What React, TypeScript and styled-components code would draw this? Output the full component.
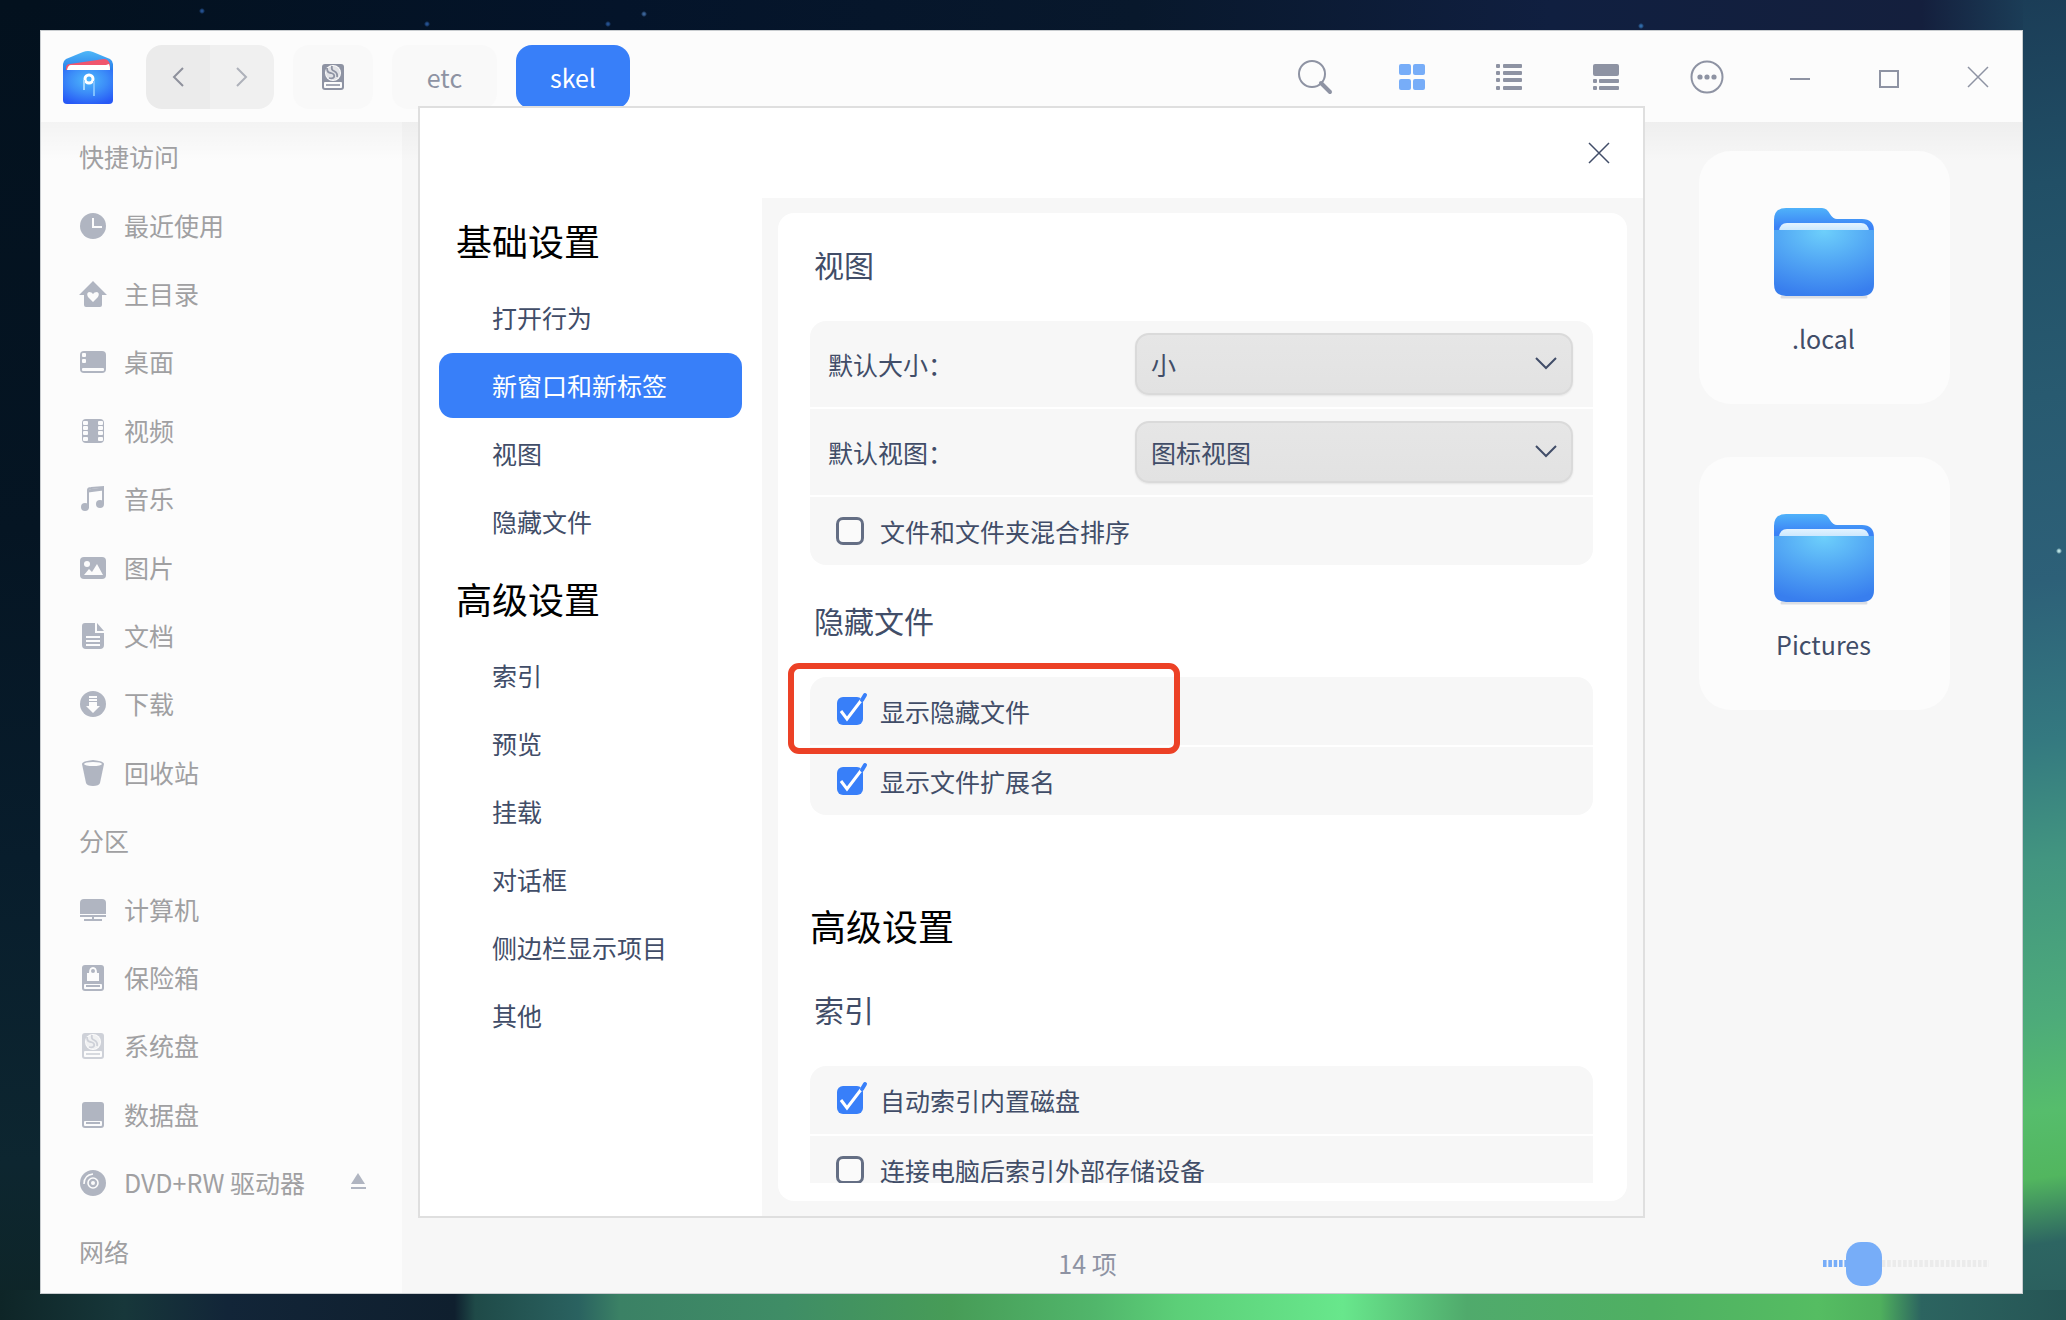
import React, { useState } from "react";
import styled, { createGlobalStyle, css } from "styled-components";

const color = {
  accent: "#387ff9",
  accentSoft: "#77adf8",
  ink: "#414d68",
  muted: "#a0a0a2",
  icon: "#b0b5c1",
  toolIcon: "#8e93a3",
  pane: "#f7f7f7",
  chrome: "#fcfcfc",
  dialogBorder: "#dfdfdf",
};

const GlobalStyle = createGlobalStyle`
  *, *::before, *::after { box-sizing: border-box; }
  html, body { margin: 0; height: 100%; }
  #root { height: 100%; }
  body {
    font-family: "Noto Sans CJK SC", "Noto Sans", sans-serif;
    font-size: 25px;
    line-height: 36px;
    color: ${color.ink};
    overflow: hidden;
  }
  button, select, input { font: inherit; color: inherit; margin: 0; }
  button { border: 0; padding: 0; background: none; cursor: pointer; }
  a { color: inherit; text-decoration: none; }
  svg { display: block; flex: none; }
`;

/* ---------- desktop and window ---------- */

const Desktop = styled.div`
  height: 100%;
  min-height: 900px;
  padding: 30px 43px 26px 40px;
  display: flex;
  background:
    radial-gradient(circle at 608px 24px, #24508f 0 1px, transparent 3px),
    radial-gradient(circle at 427px 24px, #24508f 0 1px, transparent 3px),
    radial-gradient(circle at 202px 11px, #24508f 0 1px, transparent 3px),
    radial-gradient(circle at 644px 14px, #3a6296 0 1px, transparent 3px),
    radial-gradient(circle at 1641px 26px, #2f6aa8 0 1px, transparent 3px),
    radial-gradient(circle at 2059px 551px, #b8e0e0 0 1px, transparent 3px),
    linear-gradient(90deg, #0e2527 0%, #17373a 6%, #122538 11%, #0f1f2e 22%, #1f4a48 23%, #2a6260 28%,
      #3b8165 30%, #3f8d66 38%, #479c57 46%, #51b66b 53%, #5ccf78 57%, #68e78c 65%, #50aa6c 71%,
      #4fb062 80%, #55bd62 88%, #4fb05d 91%, #2c6460 93%, #265555 100%) left bottom / 100% 30px no-repeat,
    linear-gradient(172deg, #1b3d57 0%, #214f66 14%, #285a70 30%, #2d6078 44%, #347980 56%, #429580 65%,
      #4dab7a 77%, #56bd6c 84%, #52b65f 89%, #2d6562 94%, #2a5d5c 100%) right top / 43px 100% no-repeat,
    linear-gradient(180deg, #03111e 0%, #051523 40%, #081d2c 65%, #0d2630 88%, #0e2527 100%) left top / 40px 100% no-repeat,
    linear-gradient(90deg, #03111e 0%, #04142a 30%, #08182c 55%, #101f40 75%, #141f3d 93%, #1b3d57 98%);
`;

const Window = styled.main`
  position: relative;
  flex: 1;
  min-width: 0;
  display: grid;
  grid-template: 91px minmax(0, 1fr) / 361px minmax(0, 1fr);
  border: 1px solid #c9cdd0;
  background: ${color.pane};
`;

/* ---------- title bar ---------- */

const TitleBar = styled.header`
  grid-column: 1 / -1;
  display: flex;
  align-items: center;
  justify-content: space-between;
  padding-left: 21px;
  background: ${color.chrome};
`;

const TitleGroup = styled.div<{ $gap?: number }>`
  display: flex;
  align-items: center;
  gap: ${(p) => p.$gap ?? 0}px;
`;

const ViewTools = styled.div`
  display: flex;
  margin-right: 4px;
`;

const NavPair = styled.div`
  display: flex;
  margin-left: 13px;
  border-radius: 16px;
  overflow: hidden;
`;

const NavButton = styled.button<{ $tone: string; $ink: string }>`
  width: 64px;
  height: 64px;
  display: grid;
  place-items: center;
  background: ${(p) => p.$tone};
  color: ${(p) => p.$ink};
`;

const Crumb = styled.button<{ $active?: boolean; $width: number }>`
  width: ${(p) => p.$width}px;
  height: 64px;
  display: grid;
  place-items: center;
  border-radius: 16px;
  background: ${(p) => (p.$active ? color.accent : "#f9f9f9")};
  color: ${(p) => (p.$active ? "#fff" : color.toolIcon)};
`;

const ToolButton = styled.button<{ $wide?: boolean; $on?: boolean }>`
  width: ${(p) => (p.$wide ? 97 : 89)}px;
  height: 64px;
  display: grid;
  place-items: center;
  color: ${(p) => (p.$on ? color.accentSoft : color.toolIcon)};
`;

/* ---------- left sidebar ---------- */

const edgeShade = css`
  background-image: linear-gradient(180deg, rgba(0, 0, 0, 0.035), transparent 40px);
  background-repeat: no-repeat;
`;

const Places = styled.nav`
  display: flex;
  flex-direction: column;
  padding-bottom: 8px;
  background-color: ${color.chrome};
  color: ${color.muted};
  overflow: hidden;
  ${edgeShade}
`;

const PlaceHeading = styled.div`
  flex: 1;
  display: flex;
  align-items: center;
  padding-left: 38px;
`;

const Place = styled.a`
  flex: 1;
  display: flex;
  align-items: center;
  gap: 17px;
  padding: 0 36px 0 38px;
`;

const PlaceIcon = styled.span<{ $faint?: boolean }>`
  width: 28px;
  display: grid;
  place-items: center;
  padding-top: 2px;
  color: ${color.icon};
  opacity: ${(p) => (p.$faint ? 0.6 : 1)};
`;

const Eject = styled.button`
  margin-left: auto;
  color: ${color.icon};
`;

/* ---------- file area ---------- */

const FileArea = styled.section`
  min-height: 0;
  display: flex;
  flex-direction: column;
  background-color: ${color.pane};
  ${edgeShade}
`;

const FileGrid = styled.div`
  flex: 1;
  display: flex;
  flex-direction: column;
  align-items: flex-end;
  gap: 53px;
  padding: 29px 72px 0 0;
`;

const FileCard = styled.a`
  width: 251px;
  height: 253px;
  padding: 55px 2px 0 0;
  display: flex;
  flex-direction: column;
  align-items: center;
  gap: 20px;
  border-radius: 32px;
  background: ${color.chrome};
`;

const StatusBar = styled.footer`
  height: 60px;
  display: flex;
  align-items: center;
  padding-right: 33px;
  color: ${color.toolIcon};
`;

const Count = styled.output`
  flex: 1;
  text-align: center;
`;

const ZoomSlider = styled.input<{ $fill: number }>`
  appearance: none;
  width: 166px;
  height: 44px;
  margin-left: 50px;
  background: none;

  &::-webkit-slider-runnable-track {
    height: 7px;
    background:
      linear-gradient(90deg, transparent 66%, ${color.pane} 66%) 0 0 / calc(100% / 31) 100%,
      linear-gradient(90deg, ${color.accentSoft} ${(p) => p.$fill}%, #ebebeb ${(p) => p.$fill}%);
  }
  &::-webkit-slider-thumb {
    appearance: none;
    width: 36px;
    height: 44px;
    margin-top: -18px;
    border-radius: 15px;
    background: ${color.accentSoft};
  }
`;

/* ---------- settings dialog ---------- */

const Dialog = styled.section`
  position: absolute;
  inset: 75px 377px;
  display: grid;
  grid-template: 90px minmax(0, 1fr) / 342px minmax(0, 1fr);
  border: 2px solid ${color.dialogBorder};
  background: #fff;
`;

const DialogBar = styled.header`
  grid-column: 1 / -1;
  display: flex;
  align-items: center;
  justify-content: flex-end;
  padding-right: 23px;
`;

const CloseButton = styled.button`
  width: 42px;
  height: 42px;
  display: grid;
  place-items: center;
`;

const Sections = styled.nav`
  display: flex;
  flex-direction: column;
  gap: 3px;
  padding: 1px 20px 0 19px;
`;

const SectionTitle = styled.a`
  height: 83px;
  display: flex;
  align-items: center;
  padding: 0 0 2px 17px;
  font-size: 36px;
  line-height: 48px;
  color: #000;
`;

const SectionLink = styled.a<{ $active?: boolean }>`
  height: 65px;
  display: flex;
  align-items: center;
  padding: 0 0 1px 53px;
  border-radius: 14px;
  background: ${(p) => (p.$active ? color.accent : "transparent")};
  color: ${(p) => (p.$active ? "#fff" : color.ink)};
`;

const Pane = styled.div`
  display: flex;
  padding: 15px 16px;
  background: ${color.pane};
`;

const Card = styled.div`
  flex: 1;
  min-width: 0;
  display: flex;
  padding-bottom: 18px;
  border-radius: 16px;
  background: #fff;
`;

const Scroll = styled.div`
  flex: 1;
  min-width: 0;
  overflow: hidden;
  padding: 31px 34px 0 32px;
`;

const GroupTitle = styled.h2`
  margin: 0 0 37px 4px;
  font-size: 30px;
  line-height: 40px;
  font-weight: 400;
`;

const PageTitle = styled.h1`
  margin: 86px 0 40px;
  font-size: 36px;
  line-height: 48px;
  font-weight: 400;
  color: #000;
`;

const Group = styled.div`
  position: relative;
  display: flex;
  flex-direction: column;
  gap: 2px;

  & + h2 { margin-top: 35px; }
`;

const Row = styled.div<{ $tall?: boolean }>`
  height: ${(p) => (p.$tall ? 86 : 68)}px;
  display: flex;
  align-items: center;
  padding: ${(p) => (p.$tall ? "0 20px 0 18px" : "0 20px 0 26px")};
  background: ${color.pane};

  &:first-child { border-radius: 16px 16px 0 0; }
  &:nth-last-child(1 of div) { border-radius: 0 0 16px 16px; }
`;

const RowLabel = styled.label`
  width: 307px;
  flex: none;
`;

const SelectBox = styled.span`
  position: relative;
  flex: 1;
  display: flex;

  svg {
    position: absolute;
    right: 16px;
    top: 23px;
    pointer-events: none;
  }
`;

const Select = styled.select`
  appearance: none;
  width: 100%;
  height: 62px;
  padding: 0 50px 0 14px;
  border: 2px solid #dadada;
  border-radius: 14px;
  background: linear-gradient(180deg, #e6e6e6, #e2e2e2);
  box-shadow: 0 1px 2px rgba(0, 0, 0, 0.08);
`;

const CheckLabel = styled.label`
  display: flex;
  align-items: center;
  gap: 16px;
`;

const CheckBox = styled.span`
  position: relative;
  width: 28px;
  height: 28px;

  svg {
    position: absolute;
    inset: 0;
    overflow: visible;
    pointer-events: none;
  }
`;

const CheckInput = styled.input`
  appearance: none;
  display: block;
  width: 28px;
  height: 28px;
  border: 3px solid #646e84;
  border-radius: 7px;
  background: #fafafa;

  &:checked { border-color: transparent; background: none; }
`;

const Highlight = styled.span`
  position: absolute;
  left: -22px;
  top: -14px;
  width: 392px;
  height: 91px;
  border: 6px solid #ec4126;
  border-radius: 11px;
  pointer-events: none;
`;

/* ---------- drawings ---------- */

const Logo = () => (
  <svg width="52" height="56" viewBox="0 0 52 56" aria-hidden="true">
    <defs>
      <linearGradient id="flap" x1="0" y1="0" x2="0" y2="1">
        <stop offset="0" stopColor="#4fb8f8" />
        <stop offset="1" stopColor="#2274e8" />
      </linearGradient>
      <radialGradient id="body" cx="0.5" cy="0.3" r="0.75">
        <stop offset="0" stopColor="#4db8fb" />
        <stop offset="0.5" stopColor="#3c8df8" />
        <stop offset="1" stopColor="#2759f6" />
      </radialGradient>
    </defs>
    <path d="M1 15Q1 12 4 10L21 3Q26 1 31 3L48 10Q51 12 51 15V24H1Z" fill="url(#flap)" />
    <path d="M4 19Q4 15 8 15L42 10Q46 10 48 15V21H4Z" fill="#f0566e" />
    <path d="M5 21Q6 16 9 16H44L47 15Q48 17 48 21Z" fill="#fff" />
    <path d="M1 21H51V51Q51 55 47 55H5Q1 55 1 51Z" fill="url(#body)" />
    <circle cx="27" cy="30" r="4" fill="none" stroke="#fff" strokeWidth="3" />
    <path d="M22 31V41" stroke="#9fd6ff" strokeWidth="2" />
    <path d="M32 32V47" stroke="#7fc0ff" strokeWidth="2" />
  </svg>
);

const Stroke = ({ w, h, d, sw = 2 }: { w: number; h: number; d: string; sw?: number }) => (
  <svg width={w} height={h} viewBox={`0 0 ${w} ${h}`} fill="none" stroke="currentColor" strokeWidth={sw} aria-hidden="true">
    <path d={d} />
  </svg>
);

const DiskGlyph = () => (
  <svg width="22" height="26" viewBox="0 0 22 26" aria-hidden="true">
    <path d="M3 0H19Q22 0 22 3V23Q22 26 19 26H3Q0 26 0 23V3Q0 0 3 0Z" fill="currentColor" />
    <circle cx="11" cy="9" r="8" fill={color.chrome} />
    <circle cx="11" cy="9" r="7" fill="currentColor" opacity="0.25" />
    <path d="M5 4Q5 9 9 9Q13 10 12 13Q11 15 7 14M10 2Q9 6 12 7Q16 9 15 13" stroke="currentColor" strokeWidth="1.8" fill="none" />
    <rect x="2" y="18" width="18" height="6" rx="1" fill={color.chrome} />
    <path d="M4 21H18" stroke="currentColor" strokeWidth="1.6" />
  </svg>
);

const SearchGlyph = () => (
  <svg width="36" height="36" viewBox="0 0 36 36" fill="none" stroke="currentColor" aria-hidden="true">
    <circle cx="15" cy="15" r="13" strokeWidth="2" />
    <path d="M24 24L33 33" strokeWidth="4" strokeLinecap="round" />
  </svg>
);

const GridGlyph = () => (
  <svg width="26" height="26" viewBox="0 0 26 26" fill="currentColor" aria-hidden="true">
    {[0, 14].map((x) => [0, 15].map((y) => <rect key={`${x}-${y}`} x={x} y={y} width="12" height="11" rx="2" />))}
  </svg>
);

const ListGlyph = () => (
  <svg width="26" height="26" viewBox="0 0 26 26" fill="currentColor" aria-hidden="true">
    {[0, 7, 14, 22].map((y) => (
      <g key={y}>
        <rect x="0" y={y} width="4" height="4" rx="1" />
        <rect x="7" y={y} width="19" height="4" rx="1" />
      </g>
    ))}
  </svg>
);

const DetailGlyph = () => (
  <svg width="26" height="26" viewBox="0 0 26 26" fill="currentColor" aria-hidden="true">
    <rect width="26" height="12" rx="2" />
    {[15, 22].map((y) => (
      <g key={y}>
        <rect x="0" y={y} width="4" height="4" rx="1" />
        <rect x="6" y={y} width="20" height="4" rx="1" />
      </g>
    ))}
  </svg>
);

const MoreGlyph = () => (
  <svg width="34" height="34" viewBox="0 0 34 34" aria-hidden="true">
    <circle cx="17" cy="17" r="15.5" fill="none" stroke="currentColor" strokeWidth="2" />
    {[10, 17, 24].map((x) => (
      <circle key={x} cx={x} cy="17" r="2.6" fill="currentColor" />
    ))}
  </svg>
);

const Cross = () => <Stroke w={22} h={22} d="M1 1L21 21M21 1L1 21" sw={1.5} />;

const FolderGlyph = () => (
  <svg width="104" height="94" viewBox="0 0 104 94" aria-hidden="true">
    <defs>
      <linearGradient id="tab" x1="0" y1="0" x2="0" y2="1">
        <stop offset="0" stopColor="#4fb2fa" />
        <stop offset="0.5" stopColor="#3b82f6" />
        <stop offset="1" stopColor="#3b82f6" />
      </linearGradient>
      <radialGradient id="front" cx="0.5" cy="0.02" r="0.98">
        <stop offset="0" stopColor="#6dcffb" />
        <stop offset="0.45" stopColor="#54aaf5" />
        <stop offset="1" stopColor="#387eee" />
      </radialGradient>
      <linearGradient id="paper" x1="0" y1="0" x2="0" y2="1">
        <stop offset="0" stopColor="#e3f3ff" />
        <stop offset="1" stopColor="#c9e6fd" />
      </linearGradient>
    </defs>
    <path d="M10 91H94" stroke="#8d98ad" strokeOpacity="0.3" strokeWidth="3" strokeLinecap="round" />
    <path d="M2 14Q2 2 14 2H50Q55 2 58 8Q61 13 65 13H90Q102 13 102 25V40H2Z" fill="url(#tab)" />
    <path d="M7 25Q8 17 15 17H89Q96 17 97 25Z" fill="url(#paper)" />
    <path d="M2 24H102V78Q102 90 90 90H14Q2 90 2 78Z" fill="url(#front)" />
  </svg>
);

const bg = color.chrome;
const glyphs: Record<string, React.ReactNode> = {
  recent: (
    <>
      <circle cx="14" cy="14" r="13" fill="currentColor" />
      <path d="M14 6V15H23" stroke={bg} strokeWidth="2" fill="none" />
    </>
  ),
  home: (
    <>
      <path d="M14 1L28 15H23V25Q23 27 21 27H7Q5 27 5 25V15H0Z" fill="currentColor" />
      <path d="M14 22L9 17Q7 13 10 12Q13 12 14 14Q15 12 18 12Q21 13 19 17Z" fill={bg} />
    </>
  ),
  desktop: (
    <>
      <rect x="1" y="3" width="26" height="22" rx="4" fill="currentColor" />
      <rect x="3" y="5" width="4" height="4" rx="1" fill={bg} />
      <rect x="3" y="11" width="4" height="4" rx="1" fill={bg} />
      <rect x="3" y="20" width="22" height="3" rx="1" fill={bg} />
    </>
  ),
  video: (
    <>
      <rect x="3" y="2" width="22" height="24" rx="4" fill="currentColor" />
      {[4, 9, 14, 20].map((y) => (
        <g key={y} fill={bg}>
          <rect x="4" y={y} width="5" height="4" rx="1" />
          <rect x="19" y={y} width="5" height="4" rx="1" />
        </g>
      ))}
    </>
  ),
  music: (
    <>
      <path d="M9 23V5Q9 3 12 3L24 2V19" fill="none" stroke="currentColor" strokeWidth="2" />
      <path d="M9 6L24 4" stroke="currentColor" strokeWidth="3" />
      <circle cx="6" cy="22" r="4" fill="currentColor" />
      <circle cx="21" cy="19" r="4" fill="currentColor" />
    </>
  ),
  picture: (
    <>
      <rect x="1" y="3" width="26" height="22" rx="4" fill="currentColor" />
      <circle cx="8" cy="10" r="3" fill={bg} />
      <path d="M5 21L10 15L13 18L18 10L24 21Z" fill={bg} />
    </>
  ),
  document: (
    <>
      <path d="M6 1H16V11H25V23Q25 27 21 27H7Q3 27 3 23V4Q3 1 6 1Z" fill="currentColor" />
      <path d="M18 1L25 9H18Z" fill="currentColor" />
      <path d="M7 15H21M7 19H21M7 23H21" stroke={bg} strokeWidth="2" />
    </>
  ),
  download: (
    <>
      <circle cx="14" cy="14" r="13" fill="currentColor" />
      <path d="M10 7H18M10 10H18" stroke={bg} strokeWidth="2" />
      <path d="M10 12H18V16H21L14 23L7 16H10Z" fill={bg} />
    </>
  ),
  trash: (
    <>
      <path d="M3 5Q3 2 14 1Q25 2 25 5L21 24Q20 27 14 27Q8 27 7 24Z" fill="currentColor" />
      <ellipse cx="14" cy="5" rx="9" ry="2" fill={bg} />
    </>
  ),
  computer: (
    <>
      <path d="M5 3H23Q27 3 27 7V18H1V7Q1 3 5 3Z" fill="currentColor" />
      <path d="M1 20H27M5 24H23M14 20V24" stroke="currentColor" strokeWidth="2" />
    </>
  ),
  vault: (
    <>
      <rect x="3" y="1" width="22" height="26" rx="3" fill="currentColor" />
      <path d="M10 9Q10 3 14 3Q18 3 18 9H20V17H8V9Z" fill={bg} />
      <circle cx="14" cy="7" r="2" fill="currentColor" />
      <rect x="5" y="20" width="18" height="5" rx="1" fill={bg} />
      <path d="M7 22H21" stroke="currentColor" strokeWidth="2" />
    </>
  ),
  data: (
    <>
      <rect x="3" y="1" width="22" height="26" rx="3" fill="currentColor" />
      <rect x="5" y="20" width="18" height="5" rx="1" fill={bg} />
      <path d="M7 22H21" stroke="currentColor" strokeWidth="2" />
    </>
  ),
  disc: (
    <>
      <circle cx="14" cy="14" r="13" fill="currentColor" />
      <circle cx="14" cy="14" r="5" fill="none" stroke={bg} strokeWidth="1.6" />
      <circle cx="14" cy="14" r="2" fill={bg} />
      <path d="M5 15Q5 6 14 5" stroke={bg} strokeWidth="1.6" fill="none" />
    </>
  ),
};

const Glyph = ({ name }: { name: string }) =>
  name === "system" ? (
    <DiskGlyph />
  ) : (
    <svg width="28" height="28" viewBox="0 0 28 28" aria-hidden="true">
      {glyphs[name]}
    </svg>
  );

/* ---------- data ---------- */

type PlaceEntry = { label: string; icon?: string; eject?: boolean };

const places: PlaceEntry[] = [
  { label: "快捷访问" },
  { label: "最近使用", icon: "recent" },
  { label: "主目录", icon: "home" },
  { label: "桌面", icon: "desktop" },
  { label: "视频", icon: "video" },
  { label: "音乐", icon: "music" },
  { label: "图片", icon: "picture" },
  { label: "文档", icon: "document" },
  { label: "下载", icon: "download" },
  { label: "回收站", icon: "trash" },
  { label: "分区" },
  { label: "计算机", icon: "computer" },
  { label: "保险箱", icon: "vault" },
  { label: "系统盘", icon: "system" },
  { label: "数据盘", icon: "data" },
  { label: "DVD+RW 驱动器", icon: "disc", eject: true },
  { label: "网络" },
];

const sections = [
  { title: "基础设置", items: ["打开行为", "新窗口和新标签", "视图", "隐藏文件"] },
  { title: "高级设置", items: ["索引", "预览", "挂载", "对话框", "侧边栏显示项目", "其他"] },
];

/* ---------- parts ---------- */

const CheckRow = ({ label, on = false }: { label: string; on?: boolean }) => {
  const [checked, setChecked] = useState(on);
  return (
    <Row>
      <CheckLabel>
        <CheckBox>
          <CheckInput type="checkbox" checked={checked} onChange={(e) => setChecked(e.target.checked)} />
          {checked && (
            <svg width="28" height="28" viewBox="0 0 28 28" fill="none" aria-hidden="true">
              <rect x="1" y="0" width="26" height="28" rx="6" fill={color.accent} />
              <path d="M5 14L11 22L27 1" stroke="#fff" strokeWidth="3" />
              <path d="M26 3L29 -2" stroke={color.accent} strokeWidth="4" strokeLinecap="round" />
            </svg>
          )}
        </CheckBox>
        {label}
      </CheckLabel>
    </Row>
  );
};

const SelectRow = ({ id, label, options }: { id: string; label: string; options: string[] }) => (
  <Row $tall>
    <RowLabel htmlFor={id}>{label}</RowLabel>
    <SelectBox>
      <Select id={id} defaultValue={options[0]}>
        {options.map((o) => (
          <option key={o}>{o}</option>
        ))}
      </Select>
      <Stroke w={22} h={14} d="M1 2L11 12L21 2" />
    </SelectBox>
  </Row>
);

export default function App() {
  const [zoom, setZoom] = useState(18);
  const [section, setSection] = useState("新窗口和新标签");

  return (
    <>
      <GlobalStyle />
      <Desktop>
        <Window>
          <TitleBar>
            <TitleGroup $gap={19}>
              <Logo />
              <NavPair>
                <NavButton $tone="#ebebeb" $ink="#8e919c" aria-label="后退">
                  <Stroke w={12} h={20} d="M11 1L2 10L11 19" />
                </NavButton>
                <NavButton $tone="#f0f0f0" $ink="#aeb1ba" aria-label="前进">
                  <Stroke w={12} h={20} d="M1 1L10 10L1 19" />
                </NavButton>
              </NavPair>
              <Crumb $width={80} aria-label="系统盘">
                <DiskGlyph />
              </Crumb>
              <Crumb $width={105}>etc</Crumb>
              <Crumb $width={114} $active>skel</Crumb>
            </TitleGroup>
            <TitleGroup>
              <ViewTools>
                <ToolButton $wide aria-label="搜索"><SearchGlyph /></ToolButton>
                <ToolButton $wide $on aria-label="图标视图"><GridGlyph /></ToolButton>
                <ToolButton $wide aria-label="列表视图"><ListGlyph /></ToolButton>
                <ToolButton $wide aria-label="详细信息"><DetailGlyph /></ToolButton>
              </ViewTools>
              <ToolButton $wide aria-label="菜单"><MoreGlyph /></ToolButton>
              <ToolButton aria-label="最小化"><Stroke w={20} h={6} d="M0 5H20" /></ToolButton>
              <ToolButton aria-label="最大化"><Stroke w={20} h={22} d="M1 5H19V21H1Z" /></ToolButton>
              <ToolButton aria-label="关闭"><Cross /></ToolButton>
            </TitleGroup>
          </TitleBar>

          <Places>
            {places.map((p) =>
              p.icon ? (
                <Place key={p.label} href="#">
                  <PlaceIcon $faint={p.icon === "system"}>
                    <Glyph name={p.icon} />
                  </PlaceIcon>
                  {p.label}
                  {p.eject && (
                    <Eject as="span" aria-label="弹出">
                      <svg width="16" height="18" viewBox="0 0 16 18" fill="currentColor" aria-hidden="true">
                        <path d="M8 0L15 11H1Z" />
                        <rect x="1" y="14" width="15" height="2" />
                      </svg>
                    </Eject>
                  )}
                </Place>
              ) : (
                <PlaceHeading key={p.label}>{p.label}</PlaceHeading>
              )
            )}
          </Places>

          <FileArea>
            <FileGrid>
              {[".local", "Pictures"].map((name) => (
                <FileCard key={name} href="#">
                  <FolderGlyph />
                  {name}
                </FileCard>
              ))}
            </FileGrid>
            <StatusBar>
              <Count>14 项</Count>
              <ZoomSlider
                type="range"
                aria-label="图标大小"
                min={0}
                max={100}
                value={zoom}
                $fill={zoom + 8}
                onChange={(e) => setZoom(Number(e.target.value))}
              />
            </StatusBar>
          </FileArea>

          <Dialog role="dialog" aria-label="设置">
            <DialogBar>
              <CloseButton aria-label="关闭设置"><Cross /></CloseButton>
            </DialogBar>
            <Sections>
              {sections.map((s) => (
                <React.Fragment key={s.title}>
                  <SectionTitle href="#">{s.title}</SectionTitle>
                  {s.items.map((item) => (
                    <SectionLink key={item} href="#" $active={item === section} onClick={() => setSection(item)}>
                      {item}
                    </SectionLink>
                  ))}
                </React.Fragment>
              ))}
            </Sections>
            <Pane>
              <Card>
                <Scroll>
                  <GroupTitle>视图</GroupTitle>
                  <Group>
                    <SelectRow id="size" label="默认大小：" options={["小", "中", "大"]} />
                    <SelectRow id="view" label="默认视图：" options={["图标视图", "列表视图"]} />
                    <CheckRow label="文件和文件夹混合排序" />
                  </Group>
                  <GroupTitle>隐藏文件</GroupTitle>
                  <Group>
                    <CheckRow label="显示隐藏文件" on />
                    <CheckRow label="显示文件扩展名" on />
                    <Highlight />
                  </Group>
                  <PageTitle>高级设置</PageTitle>
                  <GroupTitle>索引</GroupTitle>
                  <Group>
                    <CheckRow label="自动索引内置磁盘" on />
                    <CheckRow label="连接电脑后索引外部存储设备" />
                  </Group>
                </Scroll>
              </Card>
            </Pane>
          </Dialog>
        </Window>
      </Desktop>
    </>
  );
}
